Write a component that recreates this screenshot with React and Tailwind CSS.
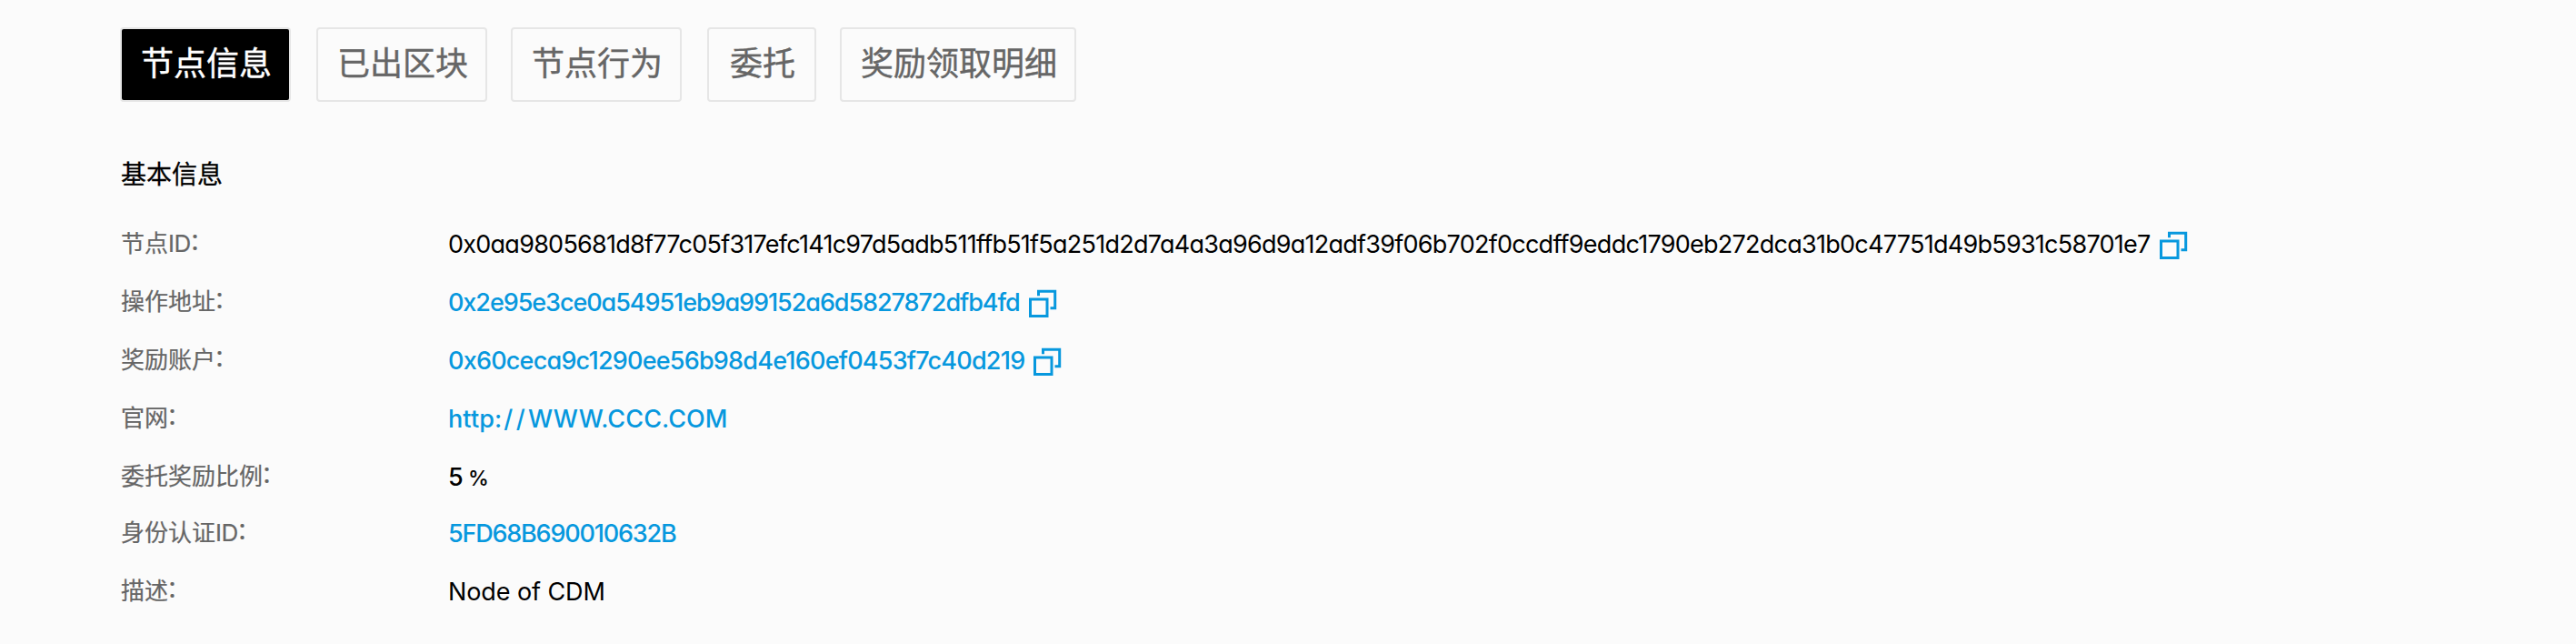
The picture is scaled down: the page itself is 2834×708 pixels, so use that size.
const tabs = [
  { label: "节点信息", active: true, style: "mr-7" },
  { label: "已出区块", style: "mr-[26px]" },
  { label: "节点行为", style: "mr-7" },
  { label: "委托", style: "mr-[26px] min-w-[120px]" },
  { label: "奖励领取明细", style: "" },
];

const rows = [
  {
    label: "节点", suffix: "ID", height: "h-16", copy: true,
    value: "0x0aa9805681d8f77c05f317efc141c97d5adb511ffb51f5a251d2d7a4a3a96d9a12adf39f06b702f0ccdff9eddc1790eb272dca31b0c47751d49b5931c58701e7",
    style: "text-black tracking-[-0.742px]",
  },
  {
    label: "操作地址", height: "h-16", copy: true, link: true,
    value: "0x2e95e3ce0a54951eb9a99152a6d5827872dfb4fd",
    style: "font-medium text-[#0798de] tracking-[-1.07px]",
  },
  {
    label: "奖励账户", height: "h-16", copy: true, link: true,
    value: "0x60ceca9c1290ee56b98d4e160ef0453f7c40d219",
    style: "font-medium text-[#0798de] tracking-[-0.78px]",
  },
  {
    label: "官网", height: "h-16", link: true,
    value: (
      <>
        http:<span className="ml-0.5 tracking-[3.4px]">//</span>WWW.CCC.COM
      </>
    ),
    style: "font-medium text-[#0798de] tracking-[0.1px]",
  },
  {
    label: "委托奖励比例", height: "h-[62px]",
    value: (
      <>
        5 <span className="-ml-0.5 text-[23px]">%</span>
      </>
    ),
    style: "font-medium text-black",
  },
  {
    label: "身份认证", suffix: "ID", height: "h-16", link: true,
    value: "5FD68B690010632B",
    style: "font-medium text-[#0798de] tracking-[-1.2px]",
  },
  {
    label: "描述", height: "h-16",
    value: "Node of CDM",
    style: "text-black tracking-[-0.1px]",
  },
];

function CopyIcon() {
  return (
    <svg width="32" height="32" viewBox="0 0 32 32" fill="none" stroke="#0798de" strokeWidth="3" className="mt-1 ml-[9px] shrink-0">
      <rect x="2.5" y="11" width="18.5" height="18.5" />
      <path d="M11.5 7.3V2.3H29.7V20.7H24.5" />
    </svg>
  );
}

export default function App() {
  return (
    <main className="h-[708px] w-full overflow-hidden bg-[#fbfbfb] pt-[30px] pl-[132px] font-['Inter','Noto_Sans_CJK_SC',sans-serif]">
      <nav className="flex">
        {tabs.map((tab) => (
          <button
            key={tab.label}
            className={`flex h-[82px] items-center justify-center rounded-[4px] border-2 border-[#e6e6e6] pr-[19px] pb-2 pl-[21px] font-['Noto_Sans_CJK_SC',sans-serif] text-[36px] leading-none [-webkit-text-stroke:0.4px_currentColor] ${tab.style} ${tab.active ? "bg-black text-white" : "text-[#666]"}`}
          >
            {tab.label}
          </button>
        ))}
      </nav>
      <h2 className="mt-[60px] ml-px h-9 font-['Noto_Sans_CJK_SC',sans-serif] text-[28px] leading-9 text-black [-webkit-text-stroke:0.3px_currentColor]">基本信息</h2>
      <dl className="mt-7 ml-px">
        {rows.map((row) => (
          <div key={row.label} className={`flex ${row.height}`}>
            <dt className="w-[360px] shrink-0 font-['Noto_Sans_CJK_SC',sans-serif] text-[26px] leading-[60px] text-[#666] [-webkit-text-stroke:0.2px_currentColor]">
              {row.label}
              {row.suffix && <span className="font-['Inter',sans-serif] tracking-[-0.4px]">{row.suffix}</span>}
              <span className="relative -top-0.5 -left-0.5">：</span>
            </dt>
            <dd className="flex h-16 items-center">
              {row.link ? (
                <a className={`text-[27px] leading-none whitespace-pre [font-feature-settings:'cv11'] ${row.style}`}>{row.value}</a>
              ) : (
                <span className={`text-[27px] leading-none whitespace-pre [font-feature-settings:'cv11'] ${row.style}`}>{row.value}</span>
              )}
              {row.copy && <CopyIcon />}
            </dd>
          </div>
        ))}
      </dl>
    </main>
  );
}
